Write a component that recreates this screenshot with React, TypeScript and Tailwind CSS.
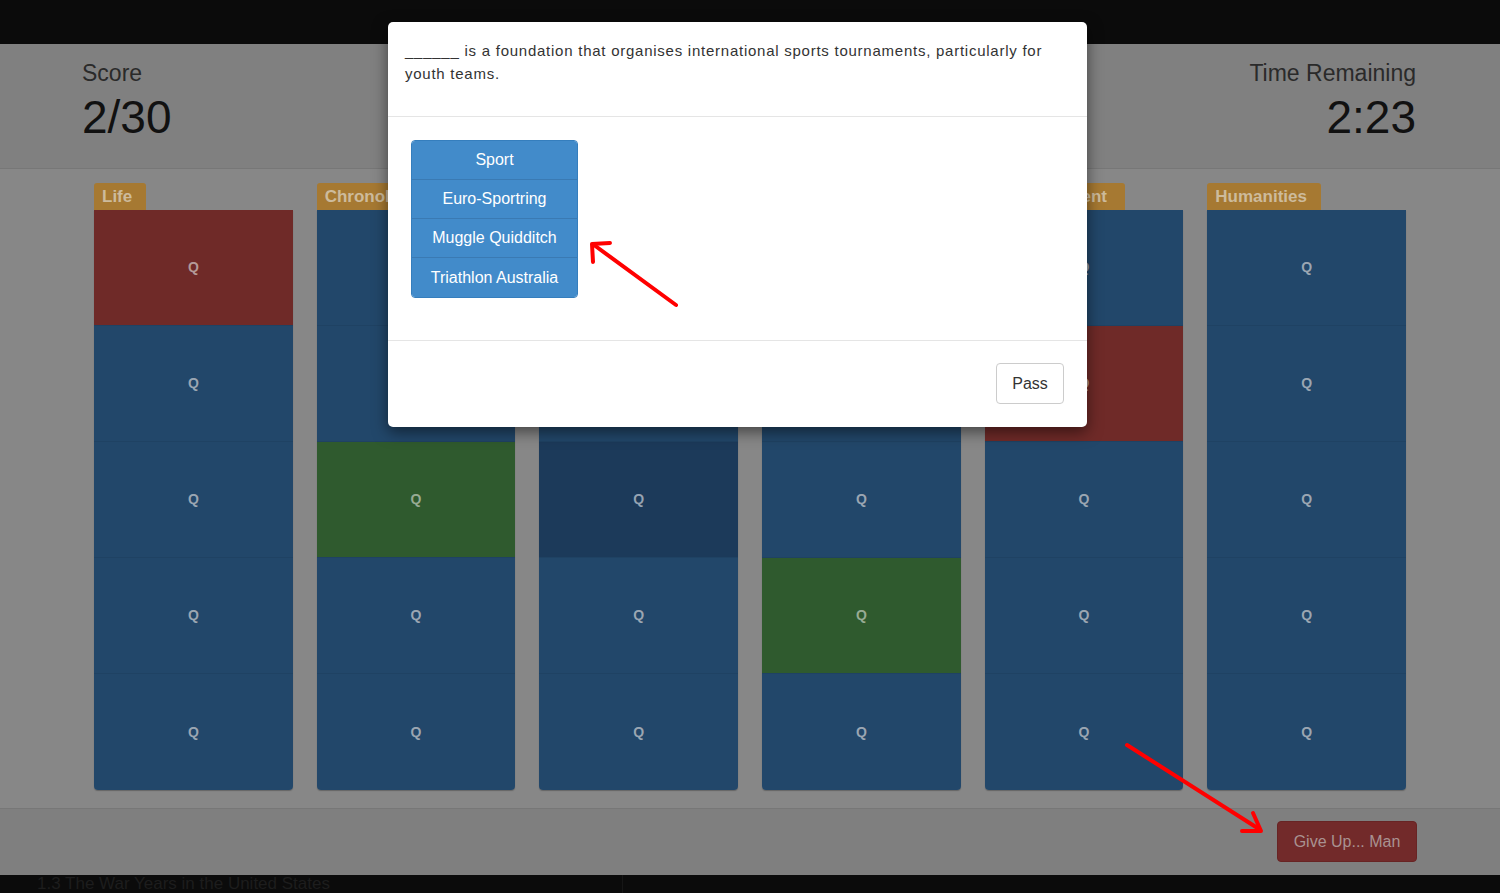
import React from "react";

type Cell = "b" | "r" | "g" | "d";

const columns: { title: string; cells: Cell[]; tabW: string }[] = [
  { title: "Life", cells: ["r", "b", "b", "b", "b"], tabW: "w-[52px]" },
  { title: "Chronology", cells: ["b", "b", "g", "b", "b"], tabW: "w-[112px]" },
  { title: "Science", cells: ["b", "b", "d", "b", "b"], tabW: "w-[84px]" },
  { title: "Sport", cells: ["b", "b", "b", "g", "b"], tabW: "w-[64px]" },
  { title: "Entertainment", cells: ["b", "r", "b", "b", "b"], tabW: "w-[140px]" },
  { title: "Humanities", cells: ["b", "b", "b", "b", "b"], tabW: "w-[114px]" },
];

const cellClass: Record<Cell, string> = {
  b: "bg-[#22476a] text-[#9ba6b2]",
  r: "bg-[#6f2a28] text-[#b49a98]",
  g: "bg-[#2f5a2e] text-[#98ab94]",
  d: "bg-[#1c3a5a] text-[#96a3b2]",
};

const answers = ["Sport", "Euro-Sportring", "Muggle Quidditch", "Triathlon Australia"];

export default function App() {
  return (
    <div
      className="relative w-[1500px] h-[893px] overflow-hidden bg-[#868686]"
      style={{ fontFamily: '"Liberation Sans", Arial, sans-serif' }}
    >
      {/* top bar */}
      <div className="h-[44px] bg-[#0b0b0b]" />

      {/* header */}
      <div className="h-[125px] bg-[#808080] border-b border-[#777777] flex justify-between px-[82px] pt-[15px]">
        <div className="flex flex-col">
          <div className="text-[23px] leading-[28px] text-[#2a2a2a]">Score</div>
          <div className="text-[46px] leading-[50px] mt-[5px] text-[#111111]">2/30</div>
        </div>
        <div className="flex flex-col items-end pr-[2px]">
          <div className="text-[23px] leading-[28px] text-[#2a2a2a]">Time Remaining</div>
          <div className="text-[46px] leading-[50px] mt-[5px] text-[#111111]">2:23</div>
        </div>
      </div>

      {/* board */}
      <div className="h-[639px] bg-[#878787] px-[94px] pt-[14px] grid grid-cols-6 gap-x-[24px]">
        {columns.map((col) => (
          <div key={col.title} className="flex flex-col">
            <div
              className={`${col.tabW} h-[27px] bg-[#a67932] rounded-t-[3px] px-[8px] text-[17px] font-bold leading-[28px] text-[#cdbb9c] whitespace-nowrap overflow-hidden`}
            >
              {col.title}
            </div>
            <div className="flex flex-col rounded-b-[4px] overflow-hidden shadow-[0_1px_1px_rgba(0,0,0,0.25)]">
              {col.cells.map((c, i) => (
                <div
                  key={i}
                  className={`${cellClass[c]} h-[116px] flex items-center justify-center text-[14px] font-bold ${
                    i < 4 ? "border-b border-[#1f4263]" : ""
                  }`}
                >
                  Q
                </div>
              ))}
            </div>
          </div>
        ))}
      </div>

      {/* footer */}
      <div className="h-[67px] bg-[#7f7f7f] border-t border-[#777777] flex items-start justify-end pr-[83px] pt-[12px]">
        <div className="h-[41px] w-[140px] bg-[#722a2a] border border-[#682424] rounded-[4px] flex items-center justify-center text-[16px] text-[#a99291]">
          Give Up... Man
        </div>
      </div>

      {/* bottom bar */}
      <div className="h-[18px] bg-[#0b0b0b] overflow-hidden flex">
        <div className="pl-[37px] text-[17px] leading-[18px] text-[#1d1d1d] whitespace-nowrap w-[623px] border-r border-[#161616]">
          1.3 The War Years in the United States
        </div>
      </div>

      {/* modal */}
      <div className="absolute left-[388px] top-[22px] w-[699px] bg-white rounded-[5px] shadow-[0_5px_15px_rgba(0,0,0,0.5)]">
        <div className="px-[17px] pt-[17px] pb-[31px] border-b border-[#e5e5e5] text-[15px] leading-[23px] text-[#333333] tracking-[0.75px]">
          ______ is a foundation that organises international sports tournaments, particularly for youth teams.
        </div>
        <div className="h-[223px] px-[23px] pt-[23px]">
          <div className="w-[167px] flex flex-col rounded-[4px] overflow-hidden border border-[#357ebd]">
            {answers.map((a, i) => (
              <div
                key={a}
                className={`h-[39px] bg-[#428bca] text-white text-[16px] flex items-center justify-center ${
                  i < 3 ? "border-b border-[#3a7ab3]" : ""
                }`}
              >
                {a}
              </div>
            ))}
          </div>
        </div>
        <div className="h-[87px] border-t border-[#e5e5e5] flex justify-end items-start pt-[22px] pr-[23px]">
          <div className="w-[68px] h-[41px] border border-[#cccccc] rounded-[4px] flex items-center justify-center text-[16px] text-[#333333]">
            Pass
          </div>
        </div>
      </div>

      {/* annotation arrows */}
      <svg className="absolute left-0 top-0 pointer-events-none" width="1500" height="893">
        <g stroke="#ff0000" strokeWidth="4" strokeLinecap="round" fill="none">
          <line x1="676" y1="305" x2="594" y2="245" />
          <polyline points="593,262 592,244 610,243" strokeLinejoin="round" />
          <line x1="1127" y1="745" x2="1259" y2="829" />
          <polyline points="1242,831 1261,831 1253,813" strokeLinejoin="round" />
        </g>
      </svg>
    </div>
  );
}
